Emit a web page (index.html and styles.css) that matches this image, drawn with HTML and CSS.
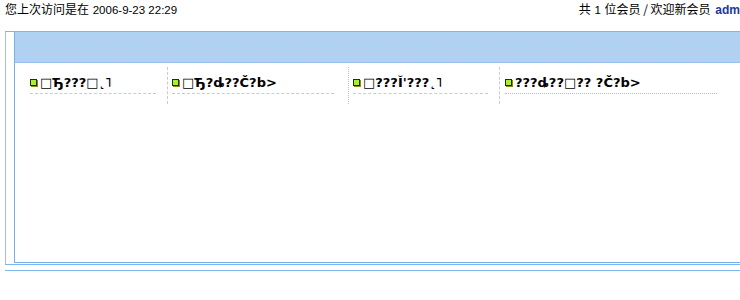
FILE: index.html
```html
<!DOCTYPE html>
<html lang="zh-CN">
<head>
<meta charset="utf-8">
<title>论坛</title>
<link rel="stylesheet" href="styles.css">
</head>
<body>
<div class="page">
  <div class="topbar">
    <div class="last-visit"><span class="cjk">您上次访问是在</span> <span class="num">2006-9-23 22:29</span></div>
    <div class="members"><span class="cjk">共</span> <span class="num">1</span> <span class="cjk">位会员 / 欢迎新会员</span> <b class="user">adm</b></div>
  </div>
  <div class="outer">
    <div class="inner">
      <div class="band"></div>
      <div class="cols">
        <div class="col col1"><div class="title"><i class="ico"></i>□Ђ???□˛˥</div></div>
        <div class="col col2"><div class="title"><i class="ico"></i>□Ђ?ȡ??Č?b&gt;</div></div>
        <div class="col col3"><div class="title"><i class="ico"></i>□???Ĭ'???˛˥</div></div>
        <div class="col col4"><div class="title"><i class="ico"></i>???ȡ??□?? ?Č?b&gt;</div></div>
      </div>
    </div>
  </div>
  <div class="rule"></div>
</div>
</body>
</html>
```
FILE: styles.css
```css
html, body {
  margin: 0;
  padding: 0;
  overflow: hidden;
  background: #fff;
}
.page {
  width: 780px;
  font-family: "Noto Sans CJK SC", "Liberation Sans", sans-serif;
  font-size: 12px;
  color: #000;
}
.topbar {
  height: 18px;
  display: flex;
  justify-content: space-between;
  align-items: center;
  padding-left: 5px;
  width: 735px;
  line-height: 16px;
}
.cjk {
  font-family: "Noto Sans CJK SC", sans-serif;
  font-size: 12px;
}
.num {
  font-family: "Liberation Sans", sans-serif;
  font-size: 11.5px;
  margin: 0 1px;
}
.user {
  color: #1a3a9a;
  font-family: "Liberation Sans", sans-serif;
  font-size: 12px;
  font-weight: bold;
  margin-left: 2px;
}
.outer {
  margin-top: 13px;
  margin-left: 5px;
  width: 770px;
  border-top: 1px solid #7fb6ea;
  border-left: 1px solid #a9bfd0;
  border-bottom: 1px solid #7fb6ea;
  padding-left: 8px;
  padding-bottom: 1px;
}
.inner {
  height: 230px;
  border-left: 1px solid #74b0ec;
  border-bottom: 1px solid #74b0ec;
}
.band {
  height: 30px;
  border-bottom: 1px solid #96c2ee;
  background-color: #aed2f2;
  background-image: radial-gradient(circle, #c8c6f2 0.8px, transparent 0.9px);
  background-size: 3px 3px;
}
.cols {
  display: flex;
  padding-top: 4px;
}
.col {
  padding-top: 4px;
  height: 33px;
}
.col1 { width: 126px; padding-left: 15px; padding-right: 11px; }
.col2 { width: 162px; padding-left: 4px; padding-right: 14px; border-left: 1px dashed #c4c8f0; }
.col3 { width: 135px; padding-left: 4px; padding-right: 11px; border-left: 1px dotted #9fd6dc; }
.col4 { width: 212px; padding-left: 5px; border-left: 1px dashed #c4cce8; }
.title {
  height: 21px;
  padding-top: 1px;
  font-family: "DejaVu Sans", sans-serif;
  font-weight: bold;
  font-size: 13px;
  border-bottom: 1px dashed #c6ccd6;
  white-space: nowrap;
  display: flex;
  align-items: center;
}
.col4 .title { border-bottom: 1px dotted #9cc8ec; }
.ico {
  display: inline-block;
  width: 5px;
  height: 5px;
  border: 1px solid #2a2a10;
  background: #a8f030;
  box-shadow: 1px 1px 0 #8a8a20;
  margin-right: 3px;
  flex: none;
}
.rule {
  margin-top: 5px;
  margin-left: 5px;
  width: 770px;
  border-top: 1px solid #7fb6ea;
}
```
